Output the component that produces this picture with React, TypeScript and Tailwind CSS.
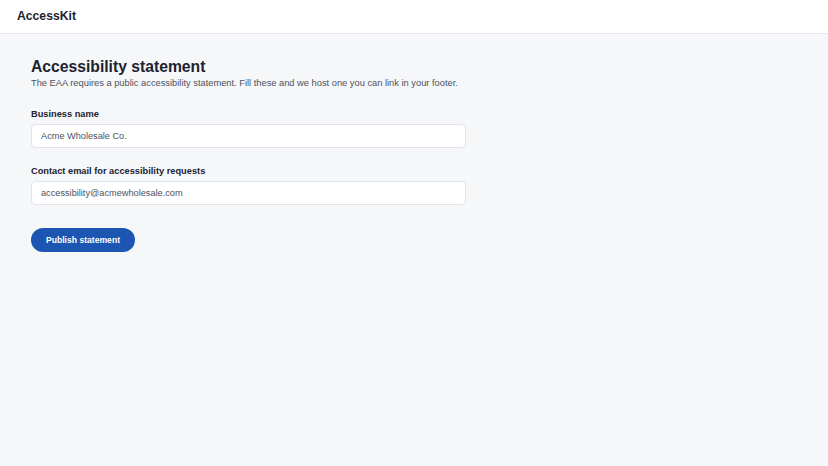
export default function App() {
  return (
    <div className="min-h-screen bg-[#f6f7f9] font-['Liberation_Sans',Arial,sans-serif] text-[#1d2230]">
      <header className="h-[34px] bg-white border-b border-[#e6e8ec] flex items-center px-[17px]">
        <span className="text-[12.2px] font-bold">AccessKit</span>
      </header>

      <main className="px-[31px] pt-[23px]">
        <h1 className="text-[15.7px] font-bold leading-[19px]">Accessibility statement</h1>
        <p className="text-[9.3px] leading-[12px] text-[#4b5260] mt-[1px]">
          The EAA requires a public accessibility statement. Fill these and we host one you can link in your footer.
        </p>

        <form className="w-[435px] mt-[19px] flex flex-col" onSubmit={(e) => e.preventDefault()}>
          <label className="text-[9.25px] font-bold leading-[12px]">Business name</label>
          <input
            defaultValue="Acme Wholesale Co."
            className="mt-[4px] h-[24px] rounded-[4px] border border-[#dfe3ea] bg-white px-[9px] text-[9.2px] text-[#4b5260] outline-none"
          />

          <label className="text-[9.25px] font-bold leading-[12px] mt-[17px]">Contact email for accessibility requests</label>
          <input
            defaultValue="accessibility@acmewholesale.com"
            className="mt-[4px] h-[24px] rounded-[4px] border border-[#dfe3ea] bg-white px-[9px] text-[9.2px] text-[#4b5260] outline-none"
          />

          <button
            type="submit"
            className="mt-[23px] self-start h-[24px] w-[104px] rounded-full bg-[#1d55b3] text-white text-[8.6px] font-bold"
          >
            Publish statement
          </button>
        </form>
      </main>
    </div>
  );
}
